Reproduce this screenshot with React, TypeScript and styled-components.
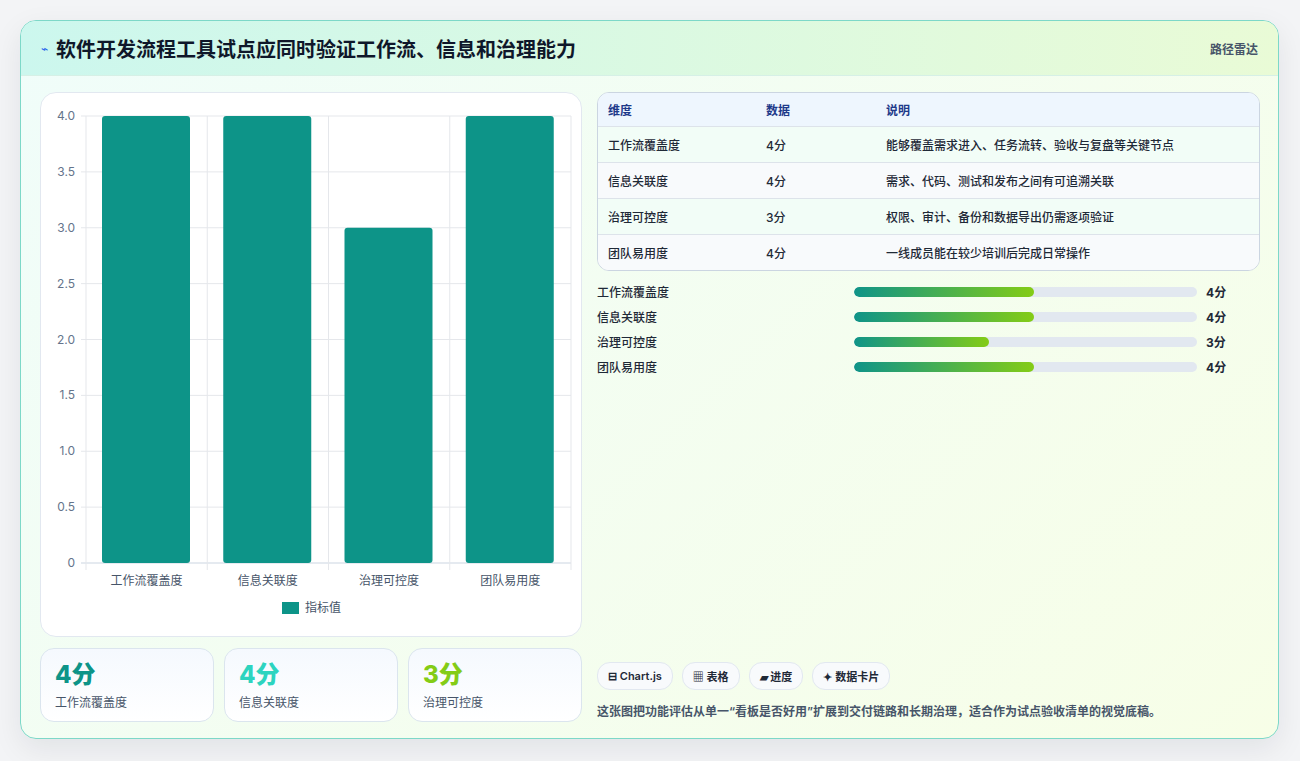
import React from "react";
import styled, { createGlobalStyle } from "styled-components";

const Global = createGlobalStyle`
  html, body { margin: 0; padding: 0; background: #f3f4f6; }
  body { font-family: Inter, "Noto Sans CJK SC", sans-serif; }
`;

const Page = styled.div`
  width: 1300px; height: 761px; box-sizing: border-box; padding: 20px 21px 22px 20px;
`;
const Card = styled.div`
  height: 100%; box-sizing: border-box; border: 1px solid #7dd8c8; border-radius: 16px; overflow: hidden;
  background: linear-gradient(135deg, #f0fdfa 0%, #f7fee7 100%);
  box-shadow: 0 10px 30px rgba(15, 23, 42, 0.08);
  display: flex; flex-direction: column;
`;
const Header = styled.div`
  height: 54px; flex: none; display: flex; align-items: center; justify-content: space-between;
  padding: 0 20px; border-bottom: 1px solid #d6f0e6;
  background: linear-gradient(90deg, #ccf7ee 0%, #e9fbd6 100%);
`;
const Title = styled.h1`
  margin: 0; font-size: 20px; font-weight: 700; color: #0f172a; display: flex; align-items: center; gap: 8px;
`;
const Bolt = styled.span` color: #2563eb; font-size: 12px; font-weight: 400; `;
const Tag = styled.span` font-size: 12px; color: #475569; font-weight: 600; `;
const Body = styled.div`
  flex: 1; display: grid; grid-template-columns: 542px 1fr; gap: 15px; padding: 16px 18px 18px 19px;
`;
const Col = styled.div` display: flex; flex-direction: column; gap: 11px; min-height: 0; `;
const ChartBox = styled.div`
  flex: 1; background: #fff; border: 1px solid #e2e8f0; border-radius: 16px;
`;
const Stats = styled.div` display: grid; grid-template-columns: repeat(3, 1fr); gap: 10px; height: 73px; `;
const Stat = styled.div`
  border: 1px solid #dbe5ee; border-radius: 14px; background: linear-gradient(180deg, #f5f9fe, #fff);
  padding: 11px 14px; display: flex; flex-direction: column;
`;
const StatVal = styled.div<{ c: string }>` font-size: 24px; font-weight: 800; color: ${p => p.c}; line-height: 30px; `;
const StatLbl = styled.div` font-size: 12px; color: #475569; margin-top: 3px; `;

const TableBox = styled.div`
  border: 1px solid #cbd5e1; border-radius: 12px; overflow: hidden; background: #fff;
`;
const Row = styled.div<{ head?: boolean; alt?: boolean }>`
  display: grid; grid-template-columns: 158px 120px 1fr; padding: 0 10px; align-items: center;
  height: ${p => (p.head ? 33 : 35)}px; font-size: 12px;
  color: ${p => (p.head ? "#1e3a8a" : "#1f2937")}; font-weight: ${p => (p.head ? 600 : 500)};
  background: ${p => (p.head ? "#eef6fe" : p.alt ? "#f8fafc" : "#f2fdf7")};
  & + & { border-top: 1px solid #dde3ea; }
`;
const Bars = styled.div` display: flex; flex-direction: column; gap: 9px; margin-top: 12px; `;
const BarRow = styled.div`
  display: grid; grid-template-columns: 248px 343px 1fr; column-gap: 9px; align-items: center;
  font-size: 12px; color: #1f2937; font-weight: 500; height: 16px;
`;
const Track = styled.div` height: 10px; border-radius: 6px; background: #e2e8f0; overflow: hidden; `;
const Fill = styled.div` height: 100%; border-radius: 6px; background: linear-gradient(90deg, #0f9488, #84cc16); `;
const BarVal = styled.span` font-weight: 700; color: #1f2937; `;
const Spacer = styled.div` flex: 1; `;
const Chips = styled.div` display: flex; gap: 9px; `;
const Chip = styled.span`
  height: 26px; padding: 0 10px; border: 1px solid #e2e8f0; border-radius: 13px; background: #f8fafc;
  display: inline-flex; align-items: center; gap: 4px; font-size: 11px; font-weight: 600; color: #1f2937;
`;
const Note = styled.p` margin: 12px 0 2px; font-size: 12px; font-weight: 600; color: #475569; `;

const data = [
  ["工作流覆盖度", 4, "能够覆盖需求进入、任务流转、验收与复盘等关键节点"],
  ["信息关联度", 4, "需求、代码、测试和发布之间有可追溯关联"],
  ["治理可控度", 3, "权限、审计、备份和数据导出仍需逐项验证"],
  ["团队易用度", 4, "一线成员能在较少培训后完成日常操作"],
] as const;

function Chart() {
  const x0 = 45, x1 = 530, y0 = 23, y1 = 470;
  const cw = (x1 - x0) / 4;
  const ticks = [0, 0.5, 1, 1.5, 2, 2.5, 3, 3.5, 4];
  const y = (v: number) => y1 - (v / 4) * (y1 - y0);
  return (
    <svg width="542" height="543" style={{ display: "block" }}>
      {ticks.map(t => (
        <g key={t}>
          <line x1={x0 - 5} x2={x1} y1={y(t)} y2={y(t)} stroke={t === 0 ? "#cbd5e1" : "#e5e7eb"} />
          <text x={x0 - 11} y={y(t) + 4} textAnchor="end" fontSize="12" fill="#64748b" fontFamily="Inter, sans-serif">
            {t === 0 ? "0" : t.toFixed(1)}
          </text>
        </g>
      ))}
      {[0, 1, 2, 3, 4].map(i => (
        <line key={i} x1={x0 + i * cw} x2={x0 + i * cw} y1={y0} y2={y1 + 7} stroke="#e5e7eb" />
      ))}
      {data.map((d, i) => {
        const bx = x0 + i * cw + 16;
        return (
          <g key={i}>
            <rect x={bx} y={y(d[1])} width={88} height={y1 - y(d[1])} rx="3" fill="#0d9488" />
            <text x={x0 + i * cw + cw / 2} y={y1 + 22} textAnchor="middle" fontSize="12" fill="#475569"
              fontFamily="'Noto Sans CJK SC', sans-serif">{d[0]}</text>
          </g>
        );
      })}
      <rect x={241} y={509} width={17} height={12} fill="#0d9488" />
      <text x={264} y={519} fontSize="12" fill="#475569" fontFamily="'Noto Sans CJK SC', sans-serif">指标值</text>
    </svg>
  );
}

export default function App() {
  const colors = ["#0d9488", "#2dd4bf", "#84cc16"];
  return (
    <Page>
      <Global />
      <Card>
        <Header>
          <Title><Bolt>⌁</Bolt>软件开发流程工具试点应同时验证工作流、信息和治理能力</Title>
          <Tag>路径雷达</Tag>
        </Header>
        <Body>
          <Col>
            <ChartBox><Chart /></ChartBox>
            <Stats>
              {data.slice(0, 3).map((d, i) => (
                <Stat key={i}>
                  <StatVal c={colors[i]}>{d[1]}分</StatVal>
                  <StatLbl>{d[0]}</StatLbl>
                </Stat>
              ))}
            </Stats>
          </Col>
          <Col style={{ gap: 0 }}>
            <TableBox>
              <Row head><span>维度</span><span>数据</span><span>说明</span></Row>
              {data.map((d, i) => (
                <Row key={i} alt={i % 2 === 1}><span>{d[0]}</span><span>{d[1]}分</span><span>{d[2]}</span></Row>
              ))}
            </TableBox>
            <Bars>
              {data.map((d, i) => (
                <BarRow key={i}>
                  <span>{d[0]}</span>
                  <Track><Fill style={{ width: `${d[1] * 13.1}%` }} /></Track>
                  <BarVal>{d[1]}分</BarVal>
                </BarRow>
              ))}
            </Bars>
            <Spacer />
            <Chips>
              <Chip>⊟ Chart.js</Chip>
              <Chip>▦ 表格</Chip>
              <Chip>▰ 进度</Chip>
              <Chip>✦ 数据卡片</Chip>
            </Chips>
            <Note>这张图把功能评估从单一“看板是否好用”扩展到交付链路和长期治理，适合作为试点验收清单的视觉底稿。</Note>
          </Col>
        </Body>
      </Card>
    </Page>
  );
}
